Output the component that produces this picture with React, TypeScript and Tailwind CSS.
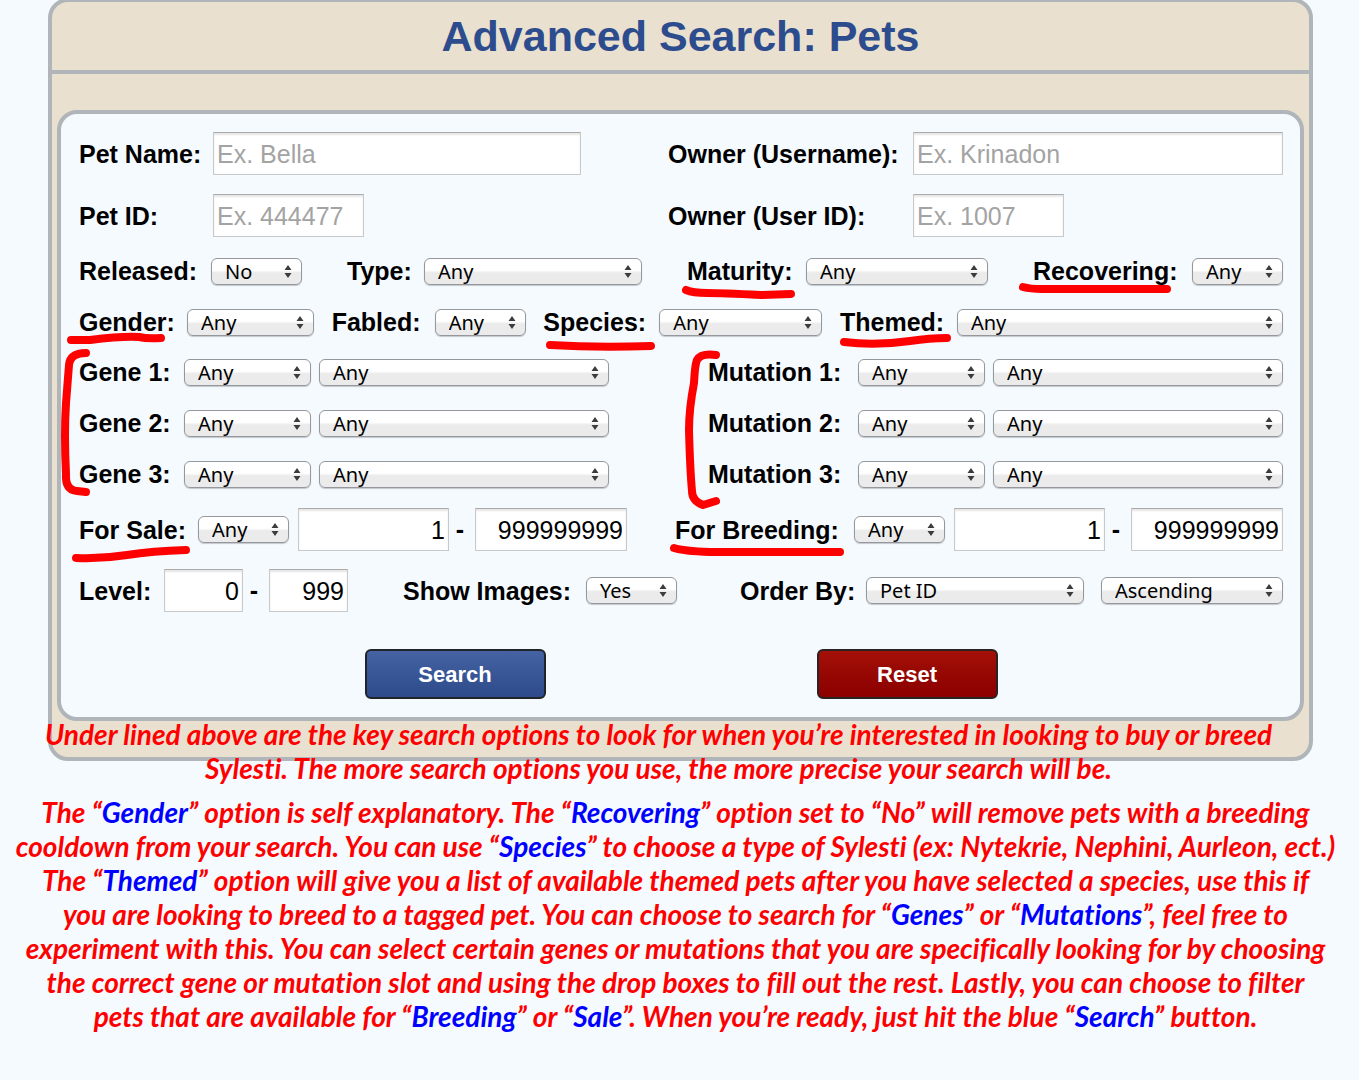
import React from "react";
import clsx from "clsx";

const Mark = ({ d }: { d: string }) => (
  <svg
    className="absolute left-0 top-0 z-10 h-px w-px overflow-visible pointer-events-none"
    fill="none"
    stroke="#ff0000"
    strokeWidth="8"
    strokeLinecap="round"
    strokeLinejoin="round"
    aria-hidden="true"
  >
    <path d={d} />
  </svg>
);

type SelectProps = {
  id?: string;
  label?: string;
  options?: string[];
  className?: string;
};

const Select = ({ id, label, options = ["Any"], className }: SelectProps) => (
  <div className={clsx("relative h-[27px]", className)}>
    <select
      id={id}
      aria-label={label}
      className="block h-[27px] w-full appearance-none rounded-md border border-[#94979b] bg-linear-to-b from-white from-45% to-[#ebebeb] to-55% pl-[13px] pr-6 font-['Noto_Sans',sans-serif] text-xl leading-6 text-black shadow-[0_1px_1px_rgba(0,0,0,0.2)]"
    >
      {options.map((option) => (
        <option key={option}>{option}</option>
      ))}
    </select>
    <svg
      className="absolute right-[10px] top-[7px] h-[13px] w-2 pointer-events-none"
      viewBox="0 0 8 13"
      fill="#3c3c3c"
      aria-hidden="true"
    >
      <path d="M4 0L7.5 5h-7zM4 13L.5 8h7z" />
    </svg>
  </div>
);

type TextBoxProps = {
  id?: string;
  label?: string;
  placeholder?: string;
  value?: string;
  className?: string;
};

const TextBox = ({ id, label, placeholder, value, className }: TextBoxProps) => (
  <input
    id={id}
    type="text"
    aria-label={label}
    placeholder={placeholder}
    defaultValue={value}
    className={clsx(
      "h-[43px] min-w-0 border border-[#c9c9c9] border-t-[#acacac] bg-white px-[3px] pt-0.5 text-[25px] text-black shadow-[inset_0_2px_2px_rgba(0,0,0,0.1)] placeholder:text-[#a3a3a3]",
      value !== undefined && "text-right",
      className
    )}
  />
);

type FieldProps = {
  id: string;
  label: string;
  labelClass: string;
  mark?: string;
  className?: string;
  children: React.ReactNode;
};

const Field = ({ id, label, labelClass, mark, className, children }: FieldProps) => (
  <div className={clsx("relative flex items-center", className)}>
    <label htmlFor={id} className={clsx("shrink-0 whitespace-nowrap font-bold", labelClass)}>
      {label}
    </label>
    {children}
    {mark && <Mark d={mark} />}
  </div>
);

const Dash = () => <span className="w-[26px] pr-1 text-center font-bold">-</span>;

const Key = ({ children }: { children: React.ReactNode }) => (
  <span className="text-[#0000ff]">{children}</span>
);

const Line = ({ children }: { children: React.ReactNode }) => (
  <span className="block whitespace-nowrap">{children}</span>
);

const slots = [1, 2, 3];

const App = () => {
  return (
    <div className="min-h-screen overflow-x-hidden bg-[#f5faff] font-['Liberation_Sans',Arial,sans-serif] text-black">
      <main className="-mt-0.5 ml-12 mr-[46px] rounded-[20px] border-4 border-[#b0b5ba] bg-[#eae0cf]">
        <header className="flex h-[72px] items-center justify-center border-b-4 border-[#b0b5ba]">
          <h1 className="text-[43px] leading-none font-bold text-[#2c4c8e]">Advanced Search: Pets</h1>
        </header>

        <div className="px-[5px] pt-9 pb-9">
          <form
            className="rounded-[20px] border-4 border-[#b0b5ba] bg-[#f5faff] pt-[18px] pb-[18px] pl-[18px] pr-[17px] text-[25px] leading-[27px]"
            onSubmit={(e) => e.preventDefault()}
          >
            <div className="grid grid-cols-[502fr_615fr] gap-x-[87px] gap-y-[19px]">
              <Field id="name" label="Pet Name:" labelClass="w-[134px] pt-0.5">
                <TextBox id="name" placeholder="Ex. Bella" className="flex-1" />
              </Field>
              <Field id="owner" label="Owner (Username):" labelClass="w-[245px] pt-0.5">
                <TextBox id="owner" placeholder="Ex. Krinadon" className="flex-1" />
              </Field>
              <Field id="pet-id" label="Pet ID:" labelClass="w-[134px] pt-0.5">
                <TextBox id="pet-id" placeholder="Ex. 444477" className="w-[151px]" />
              </Field>
              <Field id="owner-id" label="Owner (User ID):" labelClass="w-[245px] pt-0.5">
                <TextBox id="owner-id" placeholder="Ex. 1007" className="w-[151px]" />
              </Field>
            </div>

            <div className="mt-[21px] flex justify-between">
              <Field id="released" label="Released:" labelClass="w-[132px]">
                <Select id="released" options={["No", "Yes", "Any"]} className="w-[91px]" />
              </Field>
              <Field id="type" label="Type:" labelClass="w-[77px]">
                <Select id="type" className="w-[218px]" />
              </Field>
              <Field
                id="maturity"
                label="Maturity:"
                labelClass="w-[119px]"
                mark="M-1 32Q6 35 20 35T74 37L104 36"
              >
                <Select id="maturity" className="w-[182px]" />
              </Field>
              <Field
                id="recovering"
                label="Recovering:"
                labelClass="w-[159px]"
                mark="M-10 29Q-3 31 9 31L134 31"
              >
                <Select id="recovering" options={["Any", "Yes", "No"]} className="w-[91px]" />
              </Field>
            </div>

            <div className="mt-6 flex justify-between">
              <Field
                id="gender"
                label="Gender:"
                labelClass="w-[108px]"
                mark="M-8 31L11 31Q43 27 60 28Q68 30 82 29"
              >
                <Select id="gender" options={["Any", "Male", "Female"]} className="w-[127px]" />
              </Field>
              <Field id="fabled" label="Fabled:" labelClass="w-[103px]">
                <Select id="fabled" options={["Any", "Yes", "No"]} className="w-[91px]" />
              </Field>
              <Field
                id="species"
                label="Species:"
                labelClass="w-[116px]"
                mark="M7 36Q55 39 108 37"
              >
                <Select id="species" className="w-[163px]" />
              </Field>
              <Field
                id="themed"
                label="Themed:"
                labelClass="w-[117px]"
                mark="M4 33Q35 37 70 32Q90 29 107 29"
              >
                <Select id="themed" className="w-[326px]" />
              </Field>
            </div>

            <div className="mt-[23px] flex justify-between">
              <div className="relative flex flex-col gap-6">
                {slots.map((n) => (
                  <Field key={n} id={`gene-${n}`} label={`Gene ${n}:`} labelClass="w-[105px]">
                    <Select id={`gene-${n}`} className="w-[127px]" />
                    <Select label={`Gene ${n} value`} className="ml-2 w-[290px]" />
                  </Field>
                ))}
                <Mark d="M7-6Q-9-6-10 6L-13 44Q-15 75-13 115Q-14 131-2 132L7 133" />
              </div>
              <div className="relative flex flex-col gap-6">
                {slots.map((n) => (
                  <Field key={n} id={`mutation-${n}`} label={`Mutation ${n}:`} labelClass="w-[150px]">
                    <Select id={`mutation-${n}`} className="w-[127px]" />
                    <Select label={`Mutation ${n} value`} className="ml-2 w-[290px]" />
                  </Field>
                ))}
                <Mark d="M8-4Q-7-6-11 1Q-13 5-14 24Q-19 50-19 71Q-18 110-16 132Q-16 142-5 146L8 142" />
              </div>
            </div>

            <div className="mt-5 flex justify-between">
              <Field
                id="sale"
                label="For Sale:"
                labelClass="w-[119px] pt-0.5"
                mark="M-3 50Q23 51 48 47T107 42"
              >
                <Select id="sale" options={["Any", "Yes", "No"]} className="w-[91px]" />
                <TextBox label="Lowest sale price" value="1" className="ml-[9px] w-[151px]" />
                <Dash />
                <TextBox label="Highest sale price" value="999999999" className="w-[152px]" />
              </Field>
              <Field
                id="breeding"
                label="For Breeding:"
                labelClass="w-[179px] pt-0.5"
                mark="M-1 40Q8 43 35 44L165 44"
              >
                <Select id="breeding" options={["Any", "Yes", "No"]} className="w-[91px]" />
                <TextBox label="Lowest breeding price" value="1" className="ml-[9px] w-[151px]" />
                <Dash />
                <TextBox label="Highest breeding price" value="999999999" className="w-[152px]" />
              </Field>
            </div>

            <div className="mt-[18px] flex justify-between">
              <Field id="level" label="Level:" labelClass="w-[85px] pt-0.5">
                <TextBox id="level" value="0" className="w-[79px]" />
                <Dash />
                <TextBox label="Highest level" value="999" className="w-[79px]" />
              </Field>
              <Field id="images" label="Show Images:" labelClass="w-[183px] pt-0.5" className="pr-2">
                <Select id="images" options={["Yes", "No"]} className="w-[91px]" />
              </Field>
              <Field id="order" label="Order By:" labelClass="w-[126px] pt-0.5">
                <Select id="order" options={["Pet ID", "Name"]} className="w-[218px]" />
                <Select
                  label="Order direction"
                  options={["Ascending", "Descending"]}
                  className="ml-[17px] w-[182px]"
                />
              </Field>
            </div>

            <div className="mt-[37px] flex justify-center gap-[271px] text-[22px] font-bold text-white">
              <button
                type="submit"
                className="h-[50px] w-[181px] rounded-md border-2 border-[#20252c] bg-linear-to-b from-[#4562a3] to-[#2d4a8a]"
              >
                Search
              </button>
              <button
                type="reset"
                className="h-[50px] w-[181px] rounded-md border-2 border-[#2b2323] bg-linear-to-b from-[#a31008] to-[#8b0000]"
              >
                Reset
              </button>
            </div>
          </form>
        </div>
      </main>

      <section className="relative -mt-11 text-center font-['Lato',sans-serif] text-[28px] leading-[34px] font-bold italic text-[#ff0000] [font-variant-ligatures:none]">
        <p className="mr-[42px] flex flex-col items-center">
          <Line>
            Under lined above are the key search options to look for when you’re interested in looking to buy or breed
          </Line>
          <Line>Sylesti. The more search options you use, the more precise your search will be.</Line>
        </p>
        <p className="mt-[10px] mr-2 flex flex-col items-center">
          <Line>
            The “<Key>Gender</Key>” option is self explanatory. The “<Key>Recovering</Key>” option set to “No” will
            remove pets with a breeding
          </Line>
          <Line>
            cooldown from your search. You can use “<Key>Species</Key>” to choose a type of Sylesti (ex: Nytekrie,
            Nephini, Aurleon, ect.)
          </Line>
          <Line>
            The “<Key>Themed</Key>” option will give you a list of available themed pets after you have selected a
            species, use this if
          </Line>
          <Line>
            you are looking to breed to a tagged pet. You can choose to search for “<Key>Genes</Key>” or “
            <Key>Mutations</Key>”, feel free to
          </Line>
          <Line>
            experiment with this. You can select certain genes or mutations that you are specifically looking for by
            choosing
          </Line>
          <Line>
            the correct gene or mutation slot and using the drop boxes to fill out the rest. Lastly, you can choose to
            filter
          </Line>
          <Line>
            pets that are available for “<Key>Breeding</Key>” or “<Key>Sale</Key>”. When you’re ready, just hit the
            blue “<Key>Search</Key>” button.
          </Line>
        </p>
      </section>
    </div>
  );
};

export default App;
